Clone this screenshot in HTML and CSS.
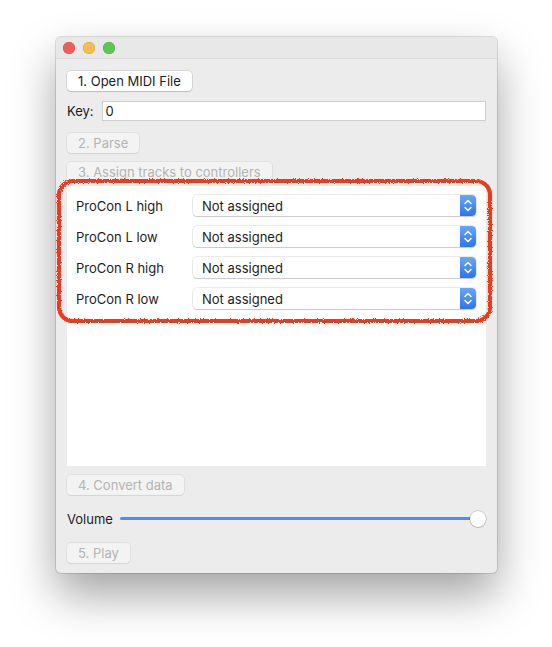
FILE: index.html
```html
<!DOCTYPE html>
<html>
<head>
<meta charset="utf-8">
<link rel="stylesheet" href="styles.css">
</head>
<body>
<div class="window">
  <div class="titlebar">
    <span class="light red"></span>
    <span class="light yellow"></span>
    <span class="light green"></span>
  </div>
  <div class="content">
    <div class="row"><button class="btn">1. Open MIDI File</button></div>
    <div class="row key-row">
      <span class="label">Key:</span>
      <div class="field">0</div>
    </div>
    <div class="row gap12"><button class="btn disabled">2. Parse</button></div>
    <div class="row gap9"><button class="btn disabled">3. Assign tracks to controllers</button></div>
    <div class="panel">
      <div class="assign"><span class="alabel">ProCon L high</span><div class="popup"><span>Not assigned</span><span class="stepper"><svg width="16" height="21" viewBox="0 0 16 21"><path d="M5 8.5 L8 5.5 L11 8.5 M5 12.5 L8 15.5 L11 12.5" fill="none" stroke="#fff" stroke-width="1.5" stroke-linecap="round" stroke-linejoin="round"/></svg></span></div></div>
      <div class="assign"><span class="alabel">ProCon L low</span><div class="popup"><span>Not assigned</span><span class="stepper"><svg width="16" height="21" viewBox="0 0 16 21"><path d="M5 8.5 L8 5.5 L11 8.5 M5 12.5 L8 15.5 L11 12.5" fill="none" stroke="#fff" stroke-width="1.5" stroke-linecap="round" stroke-linejoin="round"/></svg></span></div></div>
      <div class="assign"><span class="alabel">ProCon R high</span><div class="popup"><span>Not assigned</span><span class="stepper"><svg width="16" height="21" viewBox="0 0 16 21"><path d="M5 8.5 L8 5.5 L11 8.5 M5 12.5 L8 15.5 L11 12.5" fill="none" stroke="#fff" stroke-width="1.5" stroke-linecap="round" stroke-linejoin="round"/></svg></span></div></div>
      <div class="assign"><span class="alabel">ProCon R low</span><div class="popup"><span>Not assigned</span><span class="stepper"><svg width="16" height="21" viewBox="0 0 16 21"><path d="M5 8.5 L8 5.5 L11 8.5 M5 12.5 L8 15.5 L11 12.5" fill="none" stroke="#fff" stroke-width="1.5" stroke-linecap="round" stroke-linejoin="round"/></svg></span></div></div>
    </div>
    <div class="row gap9"><button class="btn disabled">4. Convert data</button></div>
    <div class="row volume-row">
      <span class="label">Volume</span>
      <div class="slider"><div class="track"></div><div class="knob"></div></div>
    </div>
    <div class="row gap14"><button class="btn disabled">5. Play</button></div>
  </div>
</div>
<svg class="annot" width="445" height="154" viewBox="0 0 445 154">
  <defs>
    <filter id="rough" x="-5%" y="-5%" width="110%" height="110%">
      <feTurbulence type="fractalNoise" baseFrequency="1.2" numOctaves="2" seed="5" result="n"/>
      <feDisplacementMap in="SourceGraphic" in2="n" scale="3.5"/>
    </filter>
  </defs>
  <rect x="7" y="7" width="431" height="140" rx="14" ry="14" fill="none" stroke="#ec3b1d" stroke-width="4.2" filter="url(#rough)"/>
</svg>
</body>
</html>
```
FILE: styles.css
```css
* { box-sizing: border-box; }
html, body { margin: 0; padding: 0; background: #ffffff; }
body {
  font-family: Inter, "Noto Sans", "Liberation Sans", sans-serif;
  font-size: 13px;
  color: #1d1d1d;
  padding: 37px 0 0 56px;
  height: 647px;
  overflow: hidden;
  position: relative;
}
.window {
  width: 441px;
  height: 536px;
  background: #ececec;
  border-radius: 5px;
  box-shadow: 0 0 0 1px rgba(0,0,0,0.12), 0 22px 45px rgba(0,0,0,0.36);
  overflow: hidden;
}
.titlebar {
  height: 22px;
  background: #e8e8e8;
  border-bottom: 1px solid #dcdcdc;
  display: flex;
  align-items: center;
  padding-left: 7px;
  gap: 8px;
}
.light { width: 12px; height: 12px; border-radius: 50%; display: block; }
.red { background: #ee5f58; box-shadow: inset 0 0 0 0.5px #d8483f; }
.yellow { background: #f7bd4f; box-shadow: inset 0 0 0 0.5px #dba338; }
.green { background: #5fc653; box-shadow: inset 0 0 0 0.5px #4aab3d; }
.content { padding: 12px 11px 0 11px; }
.row { display: flex; align-items: center; }
.btn {
  font: inherit;
  height: 20px;
  padding: 0 11px;
  background: #ffffff;
  color: #1d1d1d;
  border: none;
  border-radius: 4px;
  box-shadow: 0 0 0 0.5px rgba(0,0,0,0.18), 0 1px 1px rgba(0,0,0,0.12);
  line-height: 20px;
  margin: 0;
}
.btn.disabled {
  background: #f3f3f3;
  color: #b4b4b4;
  box-shadow: 0 0 0 0.5px rgba(0,0,0,0.1), 0 1px 1px rgba(0,0,0,0.05);
}
.key-row { margin-top: 10px; }
.label { margin-right: 8px; }
.field {
  flex: 1;
  height: 20px;
  background: #fff;
  border: 1px solid #cfcfcf;
  padding: 0 3px;
  line-height: 18px;
}
.gap12 { margin-top: 12px; }
.gap9 { margin-top: 9px; }
.gap14 { margin-top: 14px; }
.panel {
  margin-top: 4px;
  height: 280px;
  background: #ffffff;
  padding: 9px 10px 0 9px;
  display: flex;
  flex-direction: column;
  gap: 10px;
}
.assign { display: flex; align-items: center; height: 21px; }
.alabel { width: 117px; }
.popup {
  flex: 1;
  height: 21px;
  background: #fff;
  border-radius: 4px;
  box-shadow: 0 0 0 0.5px rgba(0,0,0,0.16), 0 1px 1px rgba(0,0,0,0.14);
  display: flex;
  align-items: center;
  justify-content: space-between;
  padding-left: 9px;
  overflow: hidden;
}
.stepper {
  width: 16px;
  height: 21px;
  background: linear-gradient(#69a7f9, #2d74ef);
  border-radius: 0 4px 4px 0;
  display: block;
}
.stepper svg { display: block; }
.volume-row { margin-top: 14px; height: 20px; }
.slider {
  flex: 1;
  position: relative;
  height: 20px;
  margin-left: -1px;
}
.track {
  position: absolute;
  left: 0; right: 8px; top: 8px;
  height: 3px;
  border-radius: 2px;
  background: #4a8ef5;
}
.knob {
  position: absolute;
  right: 0; top: 2px;
  width: 16px; height: 16px;
  border-radius: 50%;
  background: #fff;
  box-shadow: 0 0 0 0.5px rgba(0,0,0,0.25), 0 1px 1px rgba(0,0,0,0.15);
}
.annot {
  position: absolute;
  left: 52px;
  top: 174px;
}
```
